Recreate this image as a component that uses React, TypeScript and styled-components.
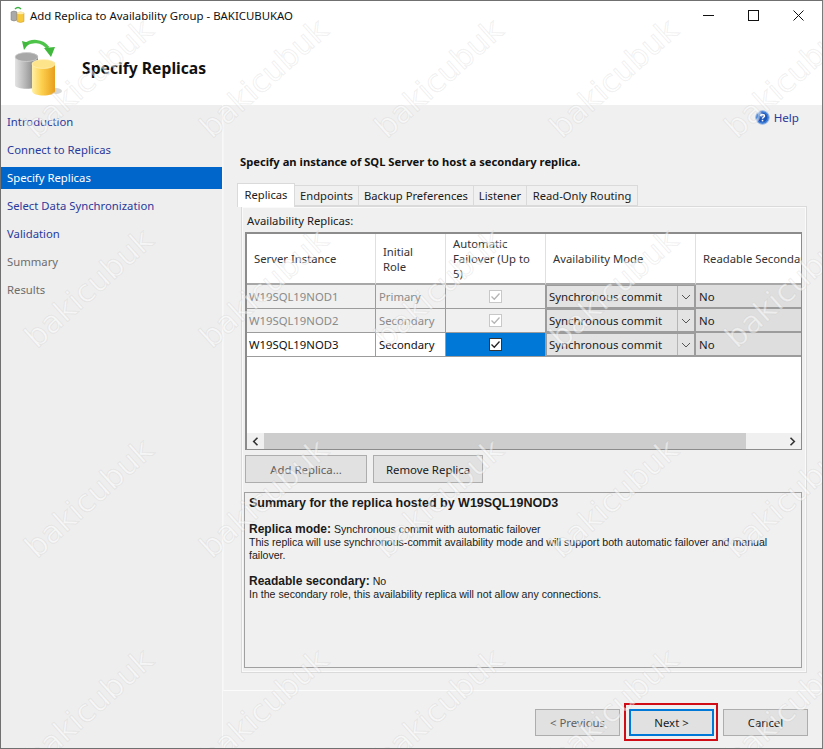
import styled, { createGlobalStyle } from "styled-components";

const GlobalStyle = createGlobalStyle`
    html, body {
        margin: 0;
        padding: 0;
        background: #f0f0f0;
    }
    * {
        box-sizing: border-box;
    }
`;

const Win = styled.div`
    position: relative;
    width: 823px;
    height: 749px;
    overflow: hidden;
    display: flex;
    flex-direction: column;
    background: #f0f0f0;
    border: 1px solid #707070;
    border-right-color: #7a7a7a;
    font-family: "Noto Sans", "Open Sans", sans-serif;
    font-size: 11.3px;
    color: #1a1a1a;
`;

const Watermark = styled.div`
    position: absolute;
    top: -28px;
    left: 0;
    display: grid;
    grid-template-columns: repeat(5, 175px);
    grid-auto-rows: 210px;
    pointer-events: none;
    z-index: 5;
`;

const WatermarkCell = styled.div`
    display: flex;
    align-items: center;
    justify-content: center;
    font-family: "DejaVu Sans", sans-serif;
    font-size: 31px;
    color: rgba(255, 255, 255, 0.5);
    -webkit-text-stroke: 1px rgba(170, 170, 170, 0.18);
    transform: rotate(-42deg);
`;

const TitleBar = styled.div`
    height: 30px;
    flex: none;
    display: flex;
    align-items: center;
    background: #fff;
    padding: 0 1px 2px 9px;
`;

const TitleText = styled.div`
    margin-left: 4px;
    font-size: 11.4px;
    color: #111;
    flex: 1;
    white-space: nowrap;
`;

const WinButton = styled.div`
    width: 45px;
    height: 28px;
    display: flex;
    align-items: center;
    justify-content: center;
`;

const Banner = styled.div`
    height: 74px;
    flex: none;
    display: flex;
    background: #fff;
    padding: 8px 0 0 13px;
`;

const BannerTitle = styled.div`
    margin: 18px 0 0 20px;
    font-size: 15.7px;
    font-weight: 700;
    color: #111;
`;

const Body = styled.div`
    flex: 1;
    min-height: 0;
    display: flex;
`;

const Sidebar = styled.div`
    width: 222px;
    flex: none;
    padding-top: 6px;
    border-right: 1px solid #f8f8f8;
    background: #eeeeee;
`;

const NavItem = styled.div<{ $selected?: boolean; $disabled?: boolean }>`
    height: 22px;
    margin-bottom: 6px;
    padding: 0 0 2px 6px;
    display: flex;
    align-items: center;
    font-size: 11.3px;
    background: ${({ $selected }) => ($selected ? "#0066cc" : "transparent")};
    color: ${({ $selected, $disabled }) => ($selected ? "#fff" : $disabled ? "#6d6d6d" : "#2a3a9c")};
`;

const Main = styled.div`
    flex: 1;
    min-width: 0;
    display: flex;
    flex-direction: column;
`;

const Content = styled.div`
    height: 586px;
    flex: none;
    padding: 0 14px 0 17px;
    border-bottom: 1px solid #fbfbfb;
    border-left: 1px solid #f5f5f5;
`;

const HelpRow = styled.div`
    height: 25px;
    display: flex;
    align-items: center;
    justify-content: flex-end;
    gap: 4px;
    padding-right: 9px;
    color: #2a3a9c;
    font-size: 11.6px;
`;

const Heading = styled.div`
    margin: 23px 0 0 -1px;
    height: 17px;
    line-height: 17px;
    font-size: 11.2px;
    font-weight: 700;
    color: #111;
`;

const TabRow = styled.div`
    margin: 13px 0 0 -4px;
    height: 23px;
    display: flex;
    align-items: flex-end;
`;

const Tab = styled.div<{ $active?: boolean; $w: number }>`
    width: ${({ $w }) => $w}px;
    height: ${({ $active }) => ($active ? "24px" : "21px")};
    margin-bottom: ${({ $active }) => ($active ? "-1px" : "0")};
    padding-bottom: ${({ $active }) => ($active ? "3px" : "0")};
    display: flex;
    align-items: center;
    justify-content: center;
    background: ${({ $active }) => ($active ? "#fff" : "#f0f0f0")};
    border: 1px solid #dadada;
    border-left-width: ${({ $active }) => ($active ? "1px" : "0")};
    border-bottom-width: ${({ $active }) => ($active ? "0" : "1px")};
    font-size: 11.2px;
    color: #1a1a1a;
    position: relative;
    z-index: ${({ $active }) => ($active ? 2 : 1)};
`;

const TabPanel = styled.div`
    width: 566px;
    height: 467px;
    padding: 5px 3px 0 3px;
    border: 1px solid #dadada;
    box-shadow: inset 0 0 0 1px #fafafa;
    background: #f0f0f0;
`;

const PanelLabel = styled.div`
    height: 17px;
    line-height: 17px;
    margin-left: 2px;
    font-size: 11.3px;
`;

const GridWrap = styled.div`
    margin-top: 3px;
    width: 557px;
    height: 218px;
    display: flex;
    flex-direction: column;
    background: #fff;
    border: 1px solid #8c8c8c;
    border-top-width: 2px;
    border-left-width: 2px;
    overflow: hidden;
`;

const GridRows = styled.div`
    flex: 1;
    min-height: 0;
    overflow: hidden;
`;

const Row = styled.div<{ $height: number }>`
    width: 600px;
    height: ${({ $height }) => $height}px;
    display: grid;
    grid-template-columns: 129px 70px 100px 150px 150px;
`;

const HeadCell = styled.div`
    display: flex;
    align-items: center;
    padding: 0 7px;
    line-height: 15px;
    font-size: 11.3px;
    color: #333;
    background: #fff;
    border-right: 1px solid #e0e0e0;
    border-bottom: 2px solid #a8a8a8;
    white-space: pre-line;
`;

const Cell = styled.div<{ $disabled?: boolean }>`
    display: flex;
    align-items: center;
    padding: 0 3px;
    font-size: 11.3px;
    background: ${({ $disabled }) => ($disabled ? "#f0f0f0" : "#fff")};
    color: ${({ $disabled }) => ($disabled ? "#8a8a8a" : "#111")};
    border-right: 1px solid #9c9c9c;
    border-bottom: 1px solid #9c9c9c;
    white-space: nowrap;
`;

const NameCell = styled(Cell)`
    padding-left: 2px;
`;

const CheckCell = styled(Cell)<{ $on?: boolean }>`
    justify-content: center;
    padding: 0;
    background: ${({ $on }) => ($on ? "#0078d7" : "#f0f0f0")};
`;

const CheckBox = styled.div<{ $on?: boolean }>`
    width: 13px;
    height: 13px;
    display: flex;
    align-items: center;
    justify-content: center;
    background: #fff;
    border: 1px solid ${({ $on }) => ($on ? "#333" : "#c8c8c8")};
`;

const ComboCell = styled.div`
    display: flex;
    align-items: stretch;
    border: 1px solid #9c9c9c;
    border-width: 1px 2px 2px 1px;
    background: #e3e3e3;
    font-size: 11.4px;
    color: #222;
`;

const ComboText = styled.div`
    flex: 1;
    display: flex;
    align-items: center;
    padding-left: 2px;
    border-right: 1px solid #b5b5b5;
    white-space: nowrap;
`;

const ComboArrow = styled.div`
    width: 16px;
    display: flex;
    align-items: center;
    justify-content: center;
`;

const ReadCell = styled.div`
    display: flex;
    align-items: center;
    padding-left: 3px;
    background: #dedede;
    border-bottom: 2px solid #9c9c9c;
    font-size: 11.4px;
    color: #222;
`;

const ScrollBar = styled.div`
    height: 16px;
    flex: none;
    display: flex;
    background: #f0f0f0;
`;

const ScrollArrow = styled.div`
    width: 17px;
    display: flex;
    align-items: center;
    justify-content: center;
`;

const ScrollThumb = styled.div`
    width: 482px;
    background: #cdcdcd;
`;

const ScrollTrack = styled.div`
    flex: 1;
`;

const ActionRow = styled.div`
    margin-top: 5px;
    display: flex;
    gap: 6px;
`;

const PushButton = styled.div<{ $w: number; $disabled?: boolean; $default?: boolean }>`
    position: relative;
    width: ${({ $w }) => $w}px;
    height: 100%;
    display: flex;
    align-items: center;
    justify-content: center;
    background: #e1e1e1;
    border: ${({ $default }) => ($default ? "2px solid #0078d7" : "1px solid #adadad")};
    font-size: 11.4px;
    color: ${({ $disabled }) => ($disabled ? "#5f5f5f" : "#1a1a1a")};
    white-space: nowrap;
`;

const ActionButton = styled(PushButton)`
    height: 28px;
`;

const RedMark = styled.div`
    position: absolute;
    top: -8px;
    left: -7px;
    right: -6px;
    bottom: -7px;
    border: 2px solid #d00c17;
`;

const Summary = styled.div`
    margin: 9px 0 0 -1px;
    width: 558px;
    height: 176px;
    padding: 4px 4px;
    background: #f0f0f0;
    border: 1px solid #a0a0a0;
    font-family: "Liberation Sans", Arial, sans-serif;
    font-size: 10.6px;
    line-height: 13px;
    color: #1a1a1a;
`;

const SummaryTitle = styled.div`
    font-weight: 700;
    font-size: 12.5px;
    margin-bottom: 13px;
`;

const SummaryBlock = styled.div`
    margin-bottom: 13px;
`;

const Strong = styled.span`
    font-weight: 700;
    font-size: 12px;
    line-height: 0;
`;

const Footer = styled.div`
    flex: 1;
    display: flex;
    justify-content: flex-end;
    gap: 9px;
    padding: 18px 14px 12px 0;
`;

function SmallIcon() {
    return (
        <svg width="16" height="18" viewBox="0 0 16 18">
            <path d="M5 3 Q8 0 11 3" fill="none" stroke="#3cb043" strokeWidth="1.5" />
            <path d="M1 6 Q4 4 7 6 V14 Q4 16 1 14Z" fill="#a9a9a9" stroke="#7b7b7b" strokeWidth=".5" />
            <path d="M7 7 Q10.500 5 14 7 V15.500 Q10.500 17.500 7 15.500Z" fill="#f6c83c" stroke="#c9972a" strokeWidth=".5" />
            <ellipse cx="10.500" cy="7" rx="3.500" ry="1.200" fill="#fdebaa" />
        </svg>
    );
}

function BannerIcon() {
    return (
        <svg width="48" height="58" viewBox="0 0 48 58">
            <defs>
                <linearGradient id="grayDb" x1="0" x2="1" y1="0" y2="0">
                    <stop offset="0" stopColor="#e4e4e4" />
                    <stop offset=".45" stopColor="#b5b5b5" />
                    <stop offset="1" stopColor="#777" />
                </linearGradient>
                <linearGradient id="yellowDb" x1="0" x2="1" y1="0" y2="0">
                    <stop offset="0" stopColor="#fff0a8" />
                    <stop offset=".4" stopColor="#fdd250" />
                    <stop offset="1" stopColor="#e79e1c" />
                </linearGradient>
            </defs>
            <ellipse cx="42" cy="52" rx="6" ry="3" fill="#d6d6d6" />
            <path d="M1 18 C1 12 24 12 24 18 V46 C24 51 1 51 1 46Z" fill="url(#grayDb)" />
            <ellipse cx="12.500" cy="18" rx="11.500" ry="4.500" fill="#a8a8a8" stroke="#ddd" strokeWidth=".6" />
            <path d="M18 25 C18 20 41 20 41 25 V52 C41 58 18 58 18 52Z" fill="url(#yellowDb)" />
            <ellipse cx="29.500" cy="25" rx="11.500" ry="4.500" fill="#fde48a" stroke="#fff4c4" strokeWidth=".6" />
            <path d="M11 6 C17 1 28 1 34 9" fill="none" stroke="#4fc44a" strokeWidth="3.500" />
            <path d="M8 2 L15 4 L10 11Z M30 9 L41 8 L37 18Z" fill="#3fb83c" />
        </svg>
    );
}

function HelpIcon() {
    return (
        <svg width="15" height="15" viewBox="0 0 15 15">
            <circle cx="7.500" cy="7.500" r="6.800" fill="#3f7fd8" stroke="#9db9e4" strokeWidth="1" />
            <circle cx="7.500" cy="7.500" r="4.800" fill="#1c56b8" />
            <path d="M5.500 5.800 C5.800 3.900 9.500 3.900 9.500 5.900 C9.500 7.300 7.500 7.200 7.500 8.800" fill="none" stroke="#fff" strokeWidth="1.500" />
            <rect x="6.700" y="9.800" width="1.600" height="1.600" fill="#fff" />
        </svg>
    );
}

function Check({ color }: { color: string }) {
    return (
        <svg width="11" height="11" viewBox="0 0 11 11">
            <path d="M1.500 5.500 L4.300 8.300 L9.500 2.500" fill="none" stroke={color} strokeWidth="1.300" />
        </svg>
    );
}

function Chevron() {
    return (
        <svg width="10" height="6" viewBox="0 0 10 6">
            <path d="M1 1 L5 5 L9 1" fill="none" stroke="#555" strokeWidth="1" />
        </svg>
    );
}

function ArrowIcon({ right }: { right?: boolean }) {
    return (
        <svg width="7" height="9" viewBox="0 0 7 9">
            <path d={right ? "M1.500 .8 L5.300 4.500 L1.500 8.200" : "M5.500 .8 L1.700 4.500 L5.500 8.200"} fill="none" stroke="#333" strokeWidth="1.600" />
        </svg>
    );
}

const navItems = [
    { label: "Introduction" },
    { label: "Connect to Replicas" },
    { label: "Specify Replicas", selected: true },
    { label: "Select Data Synchronization" },
    { label: "Validation" },
    { label: "Summary", disabled: true },
    { label: "Results", disabled: true },
];

const tabs = [
    { label: "Replicas", w: 58, active: true },
    { label: "Endpoints", w: 64 },
    { label: "Backup Preferences", w: 115 },
    { label: "Listener", w: 53 },
    { label: "Read-Only Routing", w: 111 },
];

const replicas = [
    { name: "W19SQL19NOD1", role: "Primary", locked: true },
    { name: "W19SQL19NOD2", role: "Secondary", locked: true },
    { name: "W19SQL19NOD3", role: "Secondary", locked: false },
];

export default function App() {
    return (
        <Win>
            <GlobalStyle />
            <TitleBar>
                <SmallIcon />
                <TitleText>Add Replica to Availability Group - BAKICUBUKAO</TitleText>
                <WinButton>
                    <svg width="11" height="11" viewBox="0 0 11 11"><path d="M0 5.500 H11" stroke="#111" strokeWidth="1" /></svg>
                </WinButton>
                <WinButton>
                    <svg width="11" height="11" viewBox="0 0 11 11"><rect x=".5" y=".5" width="10" height="10" fill="none" stroke="#111" /></svg>
                </WinButton>
                <WinButton>
                    <svg width="11" height="11" viewBox="0 0 11 11"><path d="M.5 .5 L10.500 10.500 M10.500 .5 L.5 10.500" stroke="#111" strokeWidth="1" /></svg>
                </WinButton>
            </TitleBar>
            <Banner>
                <BannerIcon />
                <BannerTitle>Specify Replicas</BannerTitle>
            </Banner>
            <Body>
                <Sidebar>
                    {navItems.map((item) => (
                        <NavItem key={item.label} $selected={item.selected} $disabled={item.disabled}>
                            {item.label}
                        </NavItem>
                    ))}
                </Sidebar>
                <Main>
                    <Content>
                        <HelpRow>
                            <HelpIcon />
                            Help
                        </HelpRow>
                        <Heading>Specify an instance of SQL Server to host a secondary replica.</Heading>
                        <TabRow>
                            {tabs.map((tab) => (
                                <Tab key={tab.label} $w={tab.w} $active={tab.active}>
                                    {tab.label}
                                </Tab>
                            ))}
                        </TabRow>
                        <TabPanel>
                            <PanelLabel>Availability Replicas:</PanelLabel>
                            <GridWrap>
                                <GridRows>
                                    <Row $height={51}>
                                        <HeadCell>Server Instance</HeadCell>
                                        <HeadCell>{"Initial\nRole"}</HeadCell>
                                        <HeadCell>{"Automatic\nFailover (Up to\n5)"}</HeadCell>
                                        <HeadCell>Availability Mode</HeadCell>
                                        <HeadCell>Readable Secondary</HeadCell>
                                    </Row>
                                    {replicas.map((r) => (
                                        <Row key={r.name} $height={24}>
                                            <NameCell $disabled={r.locked}>{r.name}</NameCell>
                                            <Cell $disabled={r.locked}>{r.role}</Cell>
                                            <CheckCell $disabled={r.locked} $on={!r.locked}>
                                                <CheckBox $on={!r.locked}>
                                                    <Check color={r.locked ? "#b5b5b5" : "#222"} />
                                                </CheckBox>
                                            </CheckCell>
                                            <ComboCell>
                                                <ComboText>Synchronous commit</ComboText>
                                                <ComboArrow>
                                                    <Chevron />
                                                </ComboArrow>
                                            </ComboCell>
                                            <ReadCell>No</ReadCell>
                                        </Row>
                                    ))}
                                </GridRows>
                                <ScrollBar>
                                    <ScrollArrow>
                                        <ArrowIcon />
                                    </ScrollArrow>
                                    <ScrollThumb />
                                    <ScrollTrack />
                                    <ScrollArrow>
                                        <ArrowIcon right />
                                    </ScrollArrow>
                                </ScrollBar>
                            </GridWrap>
                            <ActionRow>
                                <ActionButton $w={122} $disabled>Add Replica...</ActionButton>
                                <ActionButton $w={110}>Remove Replica</ActionButton>
                            </ActionRow>
                            <Summary>
                                <SummaryTitle>Summary for the replica hosted by W19SQL19NOD3</SummaryTitle>
                                <SummaryBlock>
                                    <Strong>Replica mode:</Strong> Synchronous commit with automatic failover
                                    <br />
                                    This replica will use synchronous-commit availability mode and will support both automatic failover and manual failover.
                                </SummaryBlock>
                                <SummaryBlock>
                                    <Strong>Readable secondary:</Strong> No
                                    <br />
                                    In the secondary role, this availability replica will not allow any connections.
                                </SummaryBlock>
                            </Summary>
                        </TabPanel>
                    </Content>
                    <Footer>
                        <PushButton $w={85} $disabled>&lt; Previous</PushButton>
                        <PushButton $w={85} $default>
                            Next &gt;
                            <RedMark />
                        </PushButton>
                        <PushButton $w={85}>Cancel</PushButton>
                    </Footer>
                </Main>
            </Body>
            <Watermark>
                {Array.from({ length: 25 }, (_, i) => (
                    <WatermarkCell key={i}>bakicubuk</WatermarkCell>
                ))}
            </Watermark>
        </Win>
    );
}
